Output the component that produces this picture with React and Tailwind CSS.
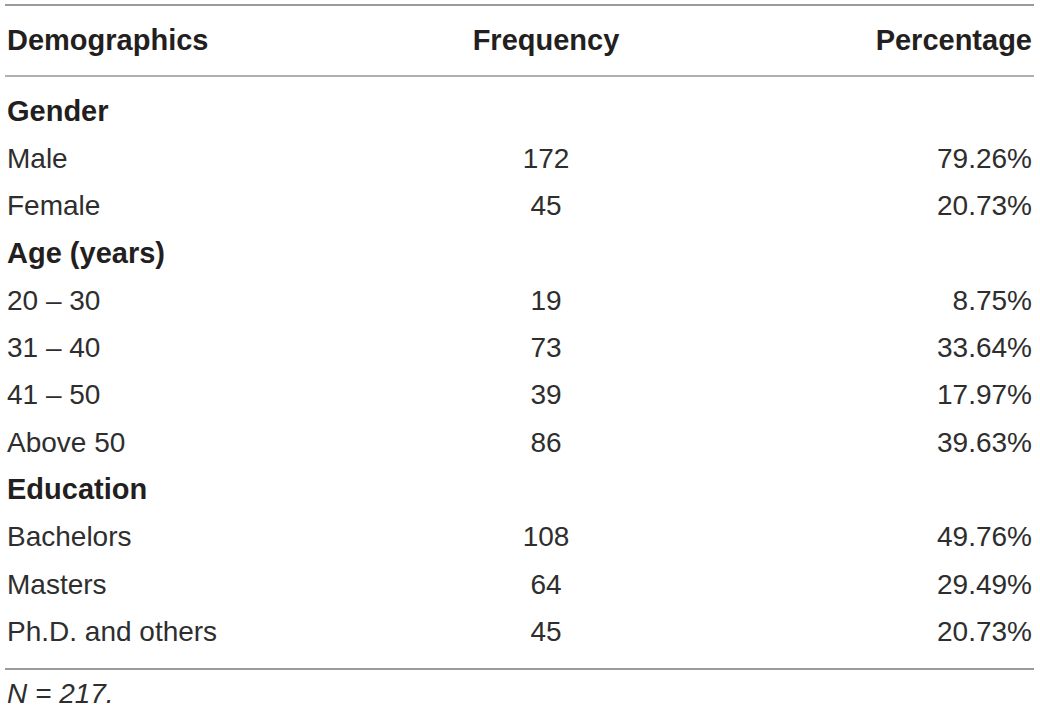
const sections = [
  {
    title: "Gender",
    rows: [
      ["Male", "172", "79.26%"],
      ["Female", "45", "20.73%"],
    ],
  },
  {
    title: "Age (years)",
    rows: [
      ["20 – 30", "19", "8.75%"],
      ["31 – 40", "73", "33.64%"],
      ["41 – 50", "39", "17.97%"],
      ["Above 50", "86", "39.63%"],
    ],
  },
  {
    title: "Education",
    rows: [
      ["Bachelors", "108", "49.76%"],
      ["Masters", "64", "29.49%"],
      ["Ph.D. and others", "45", "20.73%"],
    ],
  },
];

const Row = ({ cells }) => (
  <div className="grid grid-cols-[400px_282px_1fr] h-[47.3px] items-center text-[#2e2e2e]">
    <div className="pl-[2px]">{cells[0]}</div>
    <div className="text-center">{cells[1]}</div>
    <div className="text-right pr-[2px]">{cells[2]}</div>
  </div>
);

export default function App() {
  return (
    <div className="min-h-screen bg-white pt-[4px] pl-[5px] w-[1034px] font-['Liberation_Sans',Arial,sans-serif] text-[28px] text-[#231f20]">
      <div className="border-t-2 border-b-2 border-[#9a9a9a]">
        {/* Header */}
        <div className="grid grid-cols-[400px_282px_1fr] h-[71px] items-center font-bold text-[29px] border-b-2 border-[#b0b0b0]">
          <div className="pl-[2px]">Demographics</div>
          <div className="text-center">Frequency</div>
          <div className="text-right pr-[2px]">Percentage</div>
        </div>

        <div className="pt-[11px] pb-[12px]">
          {sections.map((s) => (
            <div key={s.title}>
              <div className="h-[47.3px] flex items-center pl-[2px] font-bold text-[29px]">
                {s.title}
              </div>
              {s.rows.map((r) => (
                <Row key={r[0]} cells={r} />
              ))}
            </div>
          ))}
        </div>
      </div>
      <div className="pl-[2px] pt-[4px] leading-[40px] italic text-[#2e2e2e]">N = 217.</div>
    </div>
  );
}
